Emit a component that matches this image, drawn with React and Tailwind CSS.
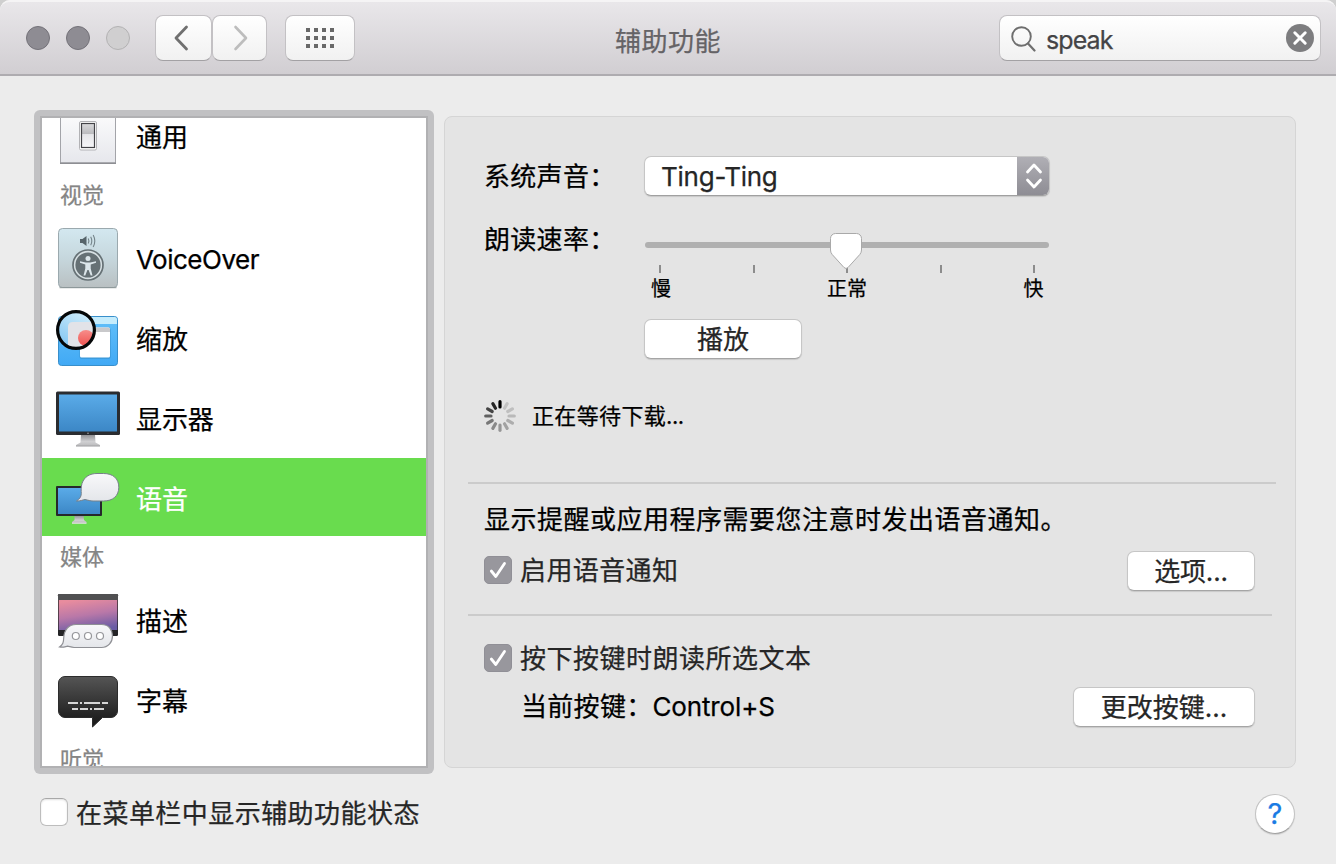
const ROW = "flex h-20 shrink-0 items-start";
const FACE =
  "rounded-[7px] border border-[#c6c6c6] border-b-[#a5a5a5] bg-white shadow-[0_1px_1px_rgba(0,0,0,0.12)]";

function GeneralIcon() {
  return (
    <svg width="64" height="80" viewBox="0 0 64 80">
      <defs>
        <linearGradient id="gen" x1="0" y1="0" x2="0" y2="1">
          <stop offset="0" stopColor="#ffffff" />
          <stop offset="1" stopColor="#e6e7ec" />
        </linearGradient>
        <linearGradient id="genSwitch" x1="0" y1="0" x2="0" y2="1">
          <stop offset="0" stopColor="#dadadc" />
          <stop offset="0.42" stopColor="#bcbcbf" />
          <stop offset="0.46" stopColor="#e6e6e9" />
          <stop offset="1" stopColor="#f6f6f8" />
        </linearGradient>
      </defs>
      <rect x="4.500" y="8.500" width="55" height="58.500" fill="url(#gen)" stroke="#a3a4a9" />
      <path d="M4 67.300H60" stroke="#8d8e93" strokeWidth="1.400" />
      <rect x="23.500" y="25.500" width="17" height="28.500" rx="1.500" fill="#fff" stroke="#b2b2b5" />
      <rect x="25.500" y="27.500" width="13" height="24" fill="url(#genSwitch)" stroke="#434347" strokeWidth="1.200" />
    </svg>
  );
}

function VoiceOverIcon() {
  return (
    <svg width="64" height="80" viewBox="0 0 64 80">
      <defs>
        <linearGradient id="vo" x1="0" y1="0" x2="0" y2="1">
          <stop offset="0" stopColor="#d3e8f0" />
          <stop offset="0.5" stopColor="#c6d7dd" />
          <stop offset="1" stopColor="#b9c0c2" />
        </linearGradient>
      </defs>
      <rect x="2.500" y="10.500" width="59" height="59" rx="4" fill="url(#vo)" stroke="#9ba9ae" />
      <path d="M3.500 69.700H60.500" stroke="#8b9496" />
      <path d="M24 21h2.500l4-3v10l-4-3H24z" fill="#56646a" />
      <path d="M32.300 20.500q1.200 2.500 0 5M34.700 18.700q2.200 4.300 0 8.600M37.200 17q3.200 6 0 12" fill="none" stroke="#75848a" strokeWidth="1.100" />
      <circle cx="32" cy="47" r="15" fill="#d7e0e3" stroke="#667175" strokeWidth="1.700" />
      <circle cx="32" cy="47" r="12.600" fill="#667175" />
      <circle cx="32" cy="40.500" r="2.500" fill="#dce6ea" />
      <path d="M24 43.300l5.700 1.200h4.600l5.700-1.200v1.500l-5.300 1.700v4l1.800 7h-1.800L32.600 52h-1.200l-2.100 5.500h-1.800l1.800-7v-4L24 44.800z" fill="#dce6ea" />
    </svg>
  );
}

function ZoomIcon() {
  return (
    <svg width="64" height="80" viewBox="0 0 64 80">
      <defs>
        <linearGradient id="zw" x1="0" y1="0" x2="0" y2="1">
          <stop offset="0" stopColor="#63c0f9" />
          <stop offset="1" stopColor="#41a9f5" />
        </linearGradient>
        <linearGradient id="lens" x1="0.800" y1="0" x2="0.200" y2="1">
          <stop offset="0" stopColor="#d3effc" />
          <stop offset="1" stopColor="#7fc4f2" />
        </linearGradient>
        <linearGradient id="dot" x1="0" y1="0" x2="0" y2="1">
          <stop offset="0" stopColor="#f78d8a" />
          <stop offset="1" stopColor="#ef5351" />
        </linearGradient>
        <clipPath id="lensClip">
          <circle cx="20" cy="32" r="18" />
        </clipPath>
      </defs>
      <rect x="2.500" y="18.500" width="59" height="49" rx="3" fill="url(#zw)" stroke="#388fcb" />
      <path d="M3 26v-4.500a2.500 2.500 0 0 1 2.500-2.500h53a2.500 2.500 0 0 1 2.500 2.500V26z" fill="#c5ecfc" />
      <rect x="23.500" y="30" width="31.200" height="30.700" rx="2" fill="#2f84bc" opacity="0.55" />
      <rect x="24" y="29.500" width="30" height="30" rx="1.500" fill="#fff" />
      <path d="M24 34v-3a1.500 1.500 0 0 1 1.500-1.500h27A1.500 1.500 0 0 1 54 31v3z" fill="#c9c9cb" />
      <circle cx="20" cy="32" r="19" fill="url(#lens)" />
      <g clipPath="url(#lensClip)">
        <path d="M12 52V29q0-5 5-5h24v28z" fill="#e2e3e8" />
        <circle cx="30" cy="40" r="8" fill="url(#dot)" />
      </g>
      <circle cx="20" cy="32" r="18.400" fill="none" stroke="#050708" strokeWidth="3.200" />
    </svg>
  );
}

function DisplayIcon() {
  return (
    <svg width="64" height="80" viewBox="0 0 64 80">
      <defs>
        <linearGradient id="screen" x1="0" y1="0" x2="0" y2="1">
          <stop offset="0" stopColor="#5aabe8" />
          <stop offset="1" stopColor="#3c87c6" />
        </linearGradient>
        <linearGradient id="stand" x1="0" y1="0" x2="0" y2="1">
          <stop offset="0" stopColor="#8f8f92" />
          <stop offset="0.6" stopColor="#d0d0d2" />
          <stop offset="1" stopColor="#b9b9bb" />
        </linearGradient>
      </defs>
      <path d="M25 56.500h14l.5 8 4.500 2.500v1.300H20V67l4.500-2.500z" fill="url(#stand)" />
      <path d="M20 68H44" stroke="#9c9c9f" strokeWidth="0.800" />
      <rect x="0" y="13.500" width="64" height="43.500" rx="1.500" fill="#2a2c30" />
      <rect x="3" y="16.500" width="58" height="37" fill="url(#screen)" />
      <circle cx="32" cy="55.300" r="0.800" fill="#a5a5a7" />
    </svg>
  );
}

function SpeechIcon() {
  return (
    <svg width="64" height="80" viewBox="0 0 64 80">
      <defs>
        <linearGradient id="bubble" x1="0" y1="0" x2="0" y2="1">
          <stop offset="0" stopColor="#f8f8fa" />
          <stop offset="1" stopColor="#e4e6ea" />
        </linearGradient>
      </defs>
      <path d="M18.500 57.500h9l.5 4.500 2.500 2v1.200h-14.500V64l2.500-2z" fill="url(#stand)" />
      <path d="M16 65.200H30.500" stroke="#e8e8ea" />
      <rect x="0" y="28" width="46" height="30" rx="1" fill="#26282c" />
      <rect x="2" y="30" width="42" height="26" fill="url(#screen)" />
      <path d="M20.500 43c3.300-2.300 4.700-4 4.800-7.500C25.200 33 24.800 29 26 25.500 28.300 18.500 34 15.500 41 15.500h6.500c9.500 0 15.300 5 15.300 13.700S57 43 47.500 43H37c-2.500 0-5-.8-8-1.500-2 .2-4.500 1.800-8.500 1.500z" fill="url(#bubble)" stroke="#77818a" strokeWidth="1" />
    </svg>
  );
}

function CaptionsIcon() {
  return (
    <svg width="64" height="80" viewBox="0 0 64 80">
      <defs>
        <linearGradient id="sky" x1="0.300" y1="0" x2="0.600" y2="1">
          <stop offset="0" stopColor="#e88c9e" />
          <stop offset="0.5" stopColor="#b978a8" />
          <stop offset="1" stopColor="#6a5ca5" />
        </linearGradient>
      </defs>
      <rect x="2" y="14" width="60" height="42" rx="1.200" fill="#242426" />
      <path d="M2 20v-4.800A1.200 1.200 0 0 1 3.200 14h57.600a1.200 1.200 0 0 1 1.200 1.200V20z" fill="#505052" />
      <rect x="2.700" y="20" width="58.600" height="30" fill="url(#sky)" />
      <path d="M3.500 67c3.500-2.500 4-4.500 4.200-9C8 49.500 13 44.500 20 44.500h25.500C53 44.500 56.500 50 56.500 56c0 6.500-4.500 11.500-11 11.500H18c-3-.3-4.500-1-6.500-1.300-2 .3-4 1.600-8 .8z" fill="url(#bubble)" stroke="#8f9095" strokeWidth="1.200" />
      <g fill="#fff" stroke="#96979b" strokeWidth="1.200">
        <circle cx="19.800" cy="56" r="3.500" />
        <circle cx="32" cy="56" r="3.500" />
        <circle cx="44" cy="56" r="3.500" />
      </g>
    </svg>
  );
}

function SubtitlesIcon() {
  return (
    <svg width="64" height="80" viewBox="0 0 64 80">
      <defs>
        <linearGradient id="dark" x1="0" y1="0" x2="0" y2="1">
          <stop offset="0" stopColor="#555555" />
          <stop offset="0.8" stopColor="#222222" />
          <stop offset="1" stopColor="#181818" />
        </linearGradient>
      </defs>
      <path d="M9 16.500h46a6.500 6.500 0 0 1 6.500 6.500v28a6.500 6.500 0 0 1-6.500 6.500h-8.500L36.500 67v-9.500H9A6.500 6.500 0 0 1 2.500 51V23A6.500 6.500 0 0 1 9 16.500z" fill="url(#dark)" stroke="#2c2c2c" />
      <path d="M12 43H22M24 43H26M28 43H44M46 43H52M16 49H22M24 49H32M34 49H36M38 49H48" stroke="#d6d6d6" strokeWidth="2" />
    </svg>
  );
}

function SideRow({ icon, label, active }) {
  return (
    <div className={ROW}>
      <div className={active ? "flex h-[78px] w-full items-start bg-[#69dc4e] pl-[14px]" : "flex h-[78px] w-full items-start pl-[14px]"}>
        {icon}
        <span className={active ? "ml-4 mt-[22px] text-[26px] leading-10 text-white" : "ml-4 mt-[22px] text-[26px] leading-10 tracking-[-0.1px] text-black"}>{label}</span>
      </div>
    </div>
  );
}

function SideHeader({ children }) {
  return <div className="h-[42px] shrink-0 pl-[18px] text-[22px] leading-[39px] text-[#858585]">{children}</div>;
}

function Checked() {
  return (
    <span className="flex size-7 shrink-0 items-center justify-center rounded-[5px] border border-[#908f96] bg-[#98979d]">
      <svg width="28" height="28" viewBox="0 0 28 28" className="shrink-0">
        <path d="M7.300 15l4.500 5.500L20.500 7.500" fill="none" stroke="#fff" strokeWidth="2.800" strokeLinecap="round" strokeLinejoin="round" />
      </svg>
    </span>
  );
}

const SPOKES = [0.14, 0.16, 0.19, 0.24, 0.29, 0.34, 0.4, 0.48, 0.58, 0.7, 0.84, 1];

function Spinner() {
  return (
    <svg width="32" height="32" viewBox="-16 -16 32 32">
      {SPOKES.map((o, i) => (
        <path key={i} d="M0-14.300V-9" stroke="#000" strokeOpacity={o} strokeWidth="3.200" strokeLinecap="round" transform={`rotate(${(i + 1) * 30})`} />
      ))}
    </svg>
  );
}

function Toolbar() {
  return (
    <header className="flex h-[76px] shrink-0 items-start rounded-t-[10px] border-t-2 border-b-2 border-t-[#f5f4f5] border-b-[#aeacb0] bg-gradient-to-b from-[#e9e7ea] to-[#d1ced2] pl-[26px] pr-[15px]">
      <div className="mt-6 flex gap-4">
        <span className="size-6 rounded-full border border-[#747279] bg-[#8e8c93]" />
        <span className="size-6 rounded-full border border-[#747279] bg-[#8e8c93]" />
        <span className="size-6 rounded-full border border-[#b3b2b3] bg-[#d0cfd0]" />
      </div>
      <div className="ml-[25px] mt-[13px] flex">
        <button className="flex h-[46px] w-[57px] items-center justify-center rounded-lg border border-[#c3c1c4] border-b-[#a3a1a4] bg-gradient-to-b from-white to-[#f1f1f1] pr-[6px]">
          <svg width="16" height="26" viewBox="0 0 16 26">
            <path d="M13.500 2L3 13l10.500 11" fill="none" stroke="#707070" strokeWidth="2.800" strokeLinecap="round" strokeLinejoin="round" />
          </svg>
        </button>
        <button className="flex h-[46px] w-[55px] items-center justify-center rounded-lg border border-[#c3c1c4] border-b-[#a3a1a4] bg-gradient-to-b from-white to-[#f1f1f1]">
          <svg width="16" height="26" viewBox="0 0 16 26">
            <path d="M3.500 2L14 13 3.500 24" fill="none" stroke="#bdbdbd" strokeWidth="2.600" strokeLinecap="round" strokeLinejoin="round" />
          </svg>
        </button>
      </div>
      <button className="ml-[18px] mt-[13px] flex h-[46px] w-[70px] items-center justify-center rounded-lg border border-[#c3c1c4] border-b-[#a3a1a4] bg-gradient-to-b from-white to-[#f1f1f1]">
        <span className="grid grid-cols-4 gap-1">
          {Array.from({ length: 12 }, (_, i) => (
            <span key={i} className="size-1 bg-[#686868]" />
          ))}
        </span>
      </button>
      <h1 className="ml-[260px] mt-5 w-[110px] whitespace-nowrap text-[26px] leading-10 tracking-[0.5px] text-[#656366]">辅助功能</h1>
      <div className="ml-auto mt-[13px] flex h-[46px] w-[322px] items-center rounded-lg border border-[#c3c1c4] border-b-[#a3a1a4] bg-gradient-to-b from-white to-[#f1f1f1] pl-[11px] pr-[6px]">
        <svg width="26" height="28" viewBox="0 0 26 28">
          <circle cx="10.500" cy="12.500" r="9.300" fill="none" stroke="#6e6e6e" strokeWidth="1.900" />
          <path d="M17 19.500L23.500 26.500" stroke="#6e6e6e" strokeWidth="2.200" strokeLinecap="round" />
        </svg>
        <span className="ml-[9px] mt-[3px] text-[25px] leading-10 tracking-[-0.9px] text-[#444446]">speak</span>
        <svg width="28" height="28" viewBox="0 0 28 28" className="ml-auto">
          <circle cx="14" cy="14" r="14" fill="#7d7d7f" />
          <path d="M8.800 8.800l10.400 10.400M19.200 8.800L8.800 19.200" stroke="#fff" strokeWidth="3" strokeLinecap="round" />
        </svg>
      </div>
    </header>
  );
}

function Slider() {
  return (
    <div className="mt-[14px] w-[404px]">
      <div className="relative flex h-10 flex-col justify-between pt-[9px]">
        <div className="h-[6px] rounded-full bg-[#b0b0b0]" />
        <div className="flex justify-between pl-[14px] pr-[14px]">
          {[0, 1, 2, 3, 4].map((i) => (
            <span key={i} className="h-2 w-[2px] bg-[#8c8c8c]" />
          ))}
        </div>
        <svg width="34" height="38" viewBox="0 0 34 38" className="absolute left-[184px] top-[-1px]">
          <path d="M6.500 1.500h21a5 5 0 0 1 5 5V18q0 2.500-1.700 4.500L19 35.500q-2 2-4 0L3.200 22.500Q1.500 20.500 1.500 18V6.500a5 5 0 0 1 5-5z" fill="#fff" stroke="#a9a9a9" strokeWidth="1" />
        </svg>
      </div>
      <div className="grid grid-cols-[32px_1fr_30px] text-center text-[20px] leading-[32px]">
        <span>慢</span>
        <span className="-ml-[2px]">正常</span>
        <span className="-ml-px">快</span>
      </div>
    </div>
  );
}

function SpeechPanel() {
  return (
    <section className="flex h-[652px] w-[852px] flex-col rounded-lg border border-[#d5d5d5] bg-[#e4e4e4] pt-[39px] text-[26px] text-black">
      <div className="flex h-10 pl-[39px]">
        <span className="mt-[1px] w-[160px] leading-10 tracking-[0.3px]">系统声音：</span>
        <div className="flex h-10 w-[406px] overflow-hidden rounded-[7px] border border-[#c6c6c6] border-b-[#a0a0a0] bg-white shadow-[0_1px_1px_rgba(0,0,0,0.12)]">
          <span className="flex-1 pl-4 leading-10 tracking-[-0.25px] text-[#262626]">Ting-Ting</span>
          <span className="-my-px -mr-px flex w-[33px] items-center justify-center bg-gradient-to-b from-[#b1b0b6] to-[#8d8c93]">
            <svg width="20" height="28" viewBox="0 0 20 28">
              <path d="M3.500 10L10 3l6.500 7M3.500 18l6.500 7 6.500-7" fill="none" stroke="#fff" strokeWidth="2.800" strokeLinecap="round" strokeLinejoin="round" />
            </svg>
          </span>
        </div>
      </div>
      <div className="mt-[23px] flex h-[84px] pl-[39px]">
        <span className="mt-px w-[161px] leading-10 tracking-[0.3px]">朗读速率：</span>
        <Slider />
      </div>
      <button className={`${FACE} ml-[199px] mt-4 h-10 w-[158px] shrink-0 text-[26px] leading-[37px] text-[#262626]`}>播放</button>
      <div className="mt-[41px] flex h-8 items-center pl-[39px]">
        <Spinner />
        <span className="ml-4 text-[22px] leading-8 tracking-[0.35px]">正在等待下载<span className="tracking-[-0.5px]">...</span></span>
      </div>
      <div className="ml-[23px] mt-[50px] h-[2px] w-[808px] shrink-0 bg-[#cbcbcb]" />
      <p className="mt-[21px] h-[29px] whitespace-nowrap pl-[39px] leading-[30px] tracking-[0.5px]">显示提醒或应用程序需要您注意时发出语音通知。</p>
      <div className="mt-[17px] flex h-[41px] items-start pl-[39px] pr-[40px]">
        <span className="mt-[5px] flex"><Checked /></span>
        <span className="ml-2 leading-10 tracking-[0.4px] text-[#262626]">启用语音通知</span>
        <button className={`${FACE} ml-auto h-10 w-[128px] leading-[37px] tracking-[-0.2px] text-[#262626]`}>选项...</button>
      </div>
      <div className="ml-[23px] mt-[22px] h-[2px] w-[804px] shrink-0 bg-[#cbcbcb]" />
      <div className="mt-7 flex h-7 items-center pl-[39px]">
        <Checked />
        <span className="ml-2 mt-[2px] leading-7 tracking-[0.5px] text-[#262626]">按下按键时朗读所选文本</span>
      </div>
      <div className="mt-[15px] flex h-[41px] items-start pl-[76px] pr-[40px]">
        <span className="leading-10 tracking-[0.3px]">当前按键：<span className="tracking-[-0.15px]">Control+S</span></span>
        <button className={`${FACE} ml-auto h-10 w-[182px] leading-[37px] text-[#262626]`}>更改按键...</button>
      </div>
    </section>
  );
}

export default function App() {
  return (
    <div className="h-[864px] w-[1336px] overflow-hidden bg-[#cfcfcf] font-['Inter','Noto_Sans_CJK_SC',sans-serif] [-webkit-text-stroke:0.25px]">
      <div className="flex h-full flex-col rounded-t-[10px] bg-[#ececec]">
        <Toolbar />
        <main className="flex items-start pl-[34px] pt-[34px]">
          <aside className="h-[664px] w-[400px] shrink-0 rounded-md bg-[#c1c1c3] p-[6px]">
            <div className="h-[652px] w-[388px] border-2 border-[#b1b1b3]">
              <div className="h-full overflow-hidden bg-white">
                <div className="-mt-[22px] flex flex-col">
                  <SideRow icon={<GeneralIcon />} label="通用" />
                  <SideHeader>视觉</SideHeader>
                  <SideRow icon={<VoiceOverIcon />} label={<span className="tracking-[-0.5px]">VoiceOver</span>} />
                  <SideRow icon={<ZoomIcon />} label="缩放" />
                  <SideRow icon={<DisplayIcon />} label="显示器" />
                  <SideRow icon={<SpeechIcon />} label="语音" active />
                  <SideHeader>媒体</SideHeader>
                  <SideRow icon={<CaptionsIcon />} label="描述" />
                  <SideRow icon={<SubtitlesIcon />} label="字幕" />
                  <SideHeader>听觉</SideHeader>
                </div>
              </div>
            </div>
          </aside>
          <div className="ml-[10px] mt-[6px]">
            <SpeechPanel />
          </div>
        </main>
        <footer className="mt-5 flex h-10 items-center pl-10 pr-[41px]">
          <span className="-mt-1 size-7 rounded-[6px] border border-[#bdbdbd] border-t-[#a8a8a8] bg-white shadow-[inset_0_1px_2px_rgba(0,0,0,0.12)]" />
          <span className="-mt-px ml-2 text-[26px] leading-10 tracking-[0.45px] text-[#262626]">在菜单栏中显示辅助功能状态</span>
          <button className="ml-auto flex size-10 items-center justify-center rounded-full border border-[#c3c3c3] border-b-[#a3a3a3] bg-white text-[29px] text-[#1a7be4] shadow-[0_1px_1px_rgba(0,0,0,0.12)]">?</button>
        </footer>
      </div>
    </div>
  );
}
